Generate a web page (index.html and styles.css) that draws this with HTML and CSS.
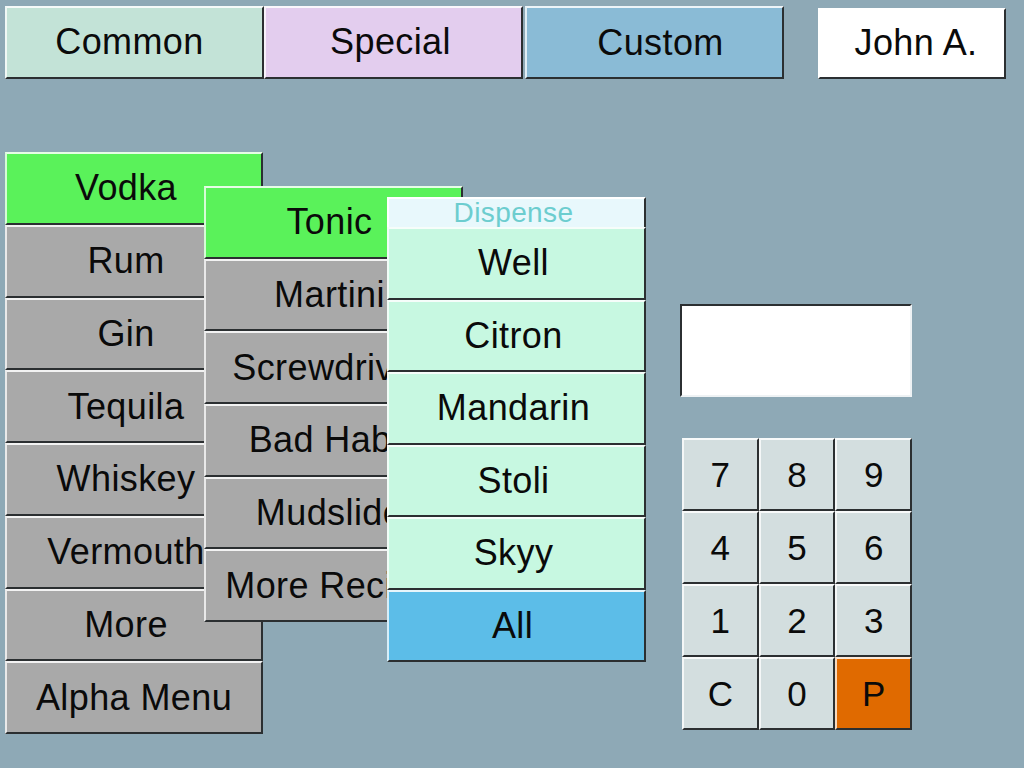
FILE: index.html
```html
<!DOCTYPE html>
<html>
<head>
<meta charset="utf-8">
<title>Bar POS</title>
<link rel="stylesheet" href="styles.css">
</head>
<body>
<div class="screen">
  <div class="tabs">
    <div class="btn tab tab-common">Common</div>
    <div class="btn tab tab-special">Special</div>
    <div class="btn tab tab-custom">Custom</div>
    <div class="btn user">John A.</div>
  </div>
  <div class="main">
    <div class="menus">
      <div class="menu menu-spirits">
        <div class="btn item green">Vodka</div>
        <div class="btn item grey">Rum</div>
        <div class="btn item grey">Gin</div>
        <div class="btn item grey">Tequila</div>
        <div class="btn item grey">Whiskey</div>
        <div class="btn item grey">Vermouth</div>
        <div class="btn item grey">More</div>
        <div class="btn item grey centered">Alpha Menu</div>
      </div>
      <div class="menu menu-mixers">
        <div class="btn item green">Tonic</div>
        <div class="btn item grey">Martini</div>
        <div class="btn item grey">Screwdriver</div>
        <div class="btn item grey">Bad Habit</div>
        <div class="btn item grey">Mudslide</div>
        <div class="btn item grey">More Recipe</div>
      </div>
      <div class="menu menu-dispense">
        <div class="dispense-title">Dispense</div>
        <div class="btn item mint">Well</div>
        <div class="btn item mint">Citron</div>
        <div class="btn item mint">Mandarin</div>
        <div class="btn item mint">Stoli</div>
        <div class="btn item mint">Skyy</div>
        <div class="btn item blue">All</div>
      </div>
    </div>
    <div class="side">
      <div class="display"></div>
      <div class="keypad">
        <div class="btn key">7</div>
        <div class="btn key">8</div>
        <div class="btn key">9</div>
        <div class="btn key">4</div>
        <div class="btn key">5</div>
        <div class="btn key">6</div>
        <div class="btn key">1</div>
        <div class="btn key">2</div>
        <div class="btn key">3</div>
        <div class="btn key">C</div>
        <div class="btn key">0</div>
        <div class="btn key key-p">P</div>
      </div>
    </div>
  </div>
</div>
</body>
</html>
```

FILE: styles.css
```css
* {
  box-sizing: border-box;
}

html, body {
  margin: 0;
  padding: 0;
}

body {
  background: #8ea9b6;
  font-family: "Liberation Sans", Arial, sans-serif;
  color: #0a0a0a;
}

.screen {
  width: 1024px;
  height: 768px;
  overflow: hidden;
  background: #8ea9b6;
}

.btn {
  display: flex;
  align-items: center;
  justify-content: center;
  font-size: 36px;
  letter-spacing: 0.4px;
  line-height: 1;
  border-top: 2px solid rgba(255, 255, 255, 0.85);
  border-left: 2px solid rgba(255, 255, 255, 0.75);
  border-bottom: 2px solid #2b2f31;
  border-right: 2px solid #2b2f31;
  white-space: nowrap;
  overflow: hidden;
}

/* top tabs */
.tabs {
  display: flex;
  align-items: flex-start;
  padding: 6px 0 0 5px;
  height: 79px;
}

.tab {
  height: 73px;
  width: 259px;
  padding-bottom: 2px;
}

.tab-common {
  background: #c3e3d7;
  padding-right: 10px;
}

.tab-special {
  background: #e3cdee;
  padding-right: 6px;
}

.tab-custom {
  background: #8abbd6;
  margin-left: 2px;
  padding-top: 3px;
  padding-left: 12px;
}

.user {
  margin-top: 2px;
  margin-left: 34px;
  width: 188px;
  height: 71px;
  background: #ffffff;
  padding-bottom: 2px;
  padding-left: 8px;
}

/* main area */
.main {
  display: flex;
  margin-top: 73px;
  padding-left: 5px;
}

.menus {
  position: relative;
  width: 258px;
  flex: none;
}

.menu {
  display: grid;
  width: 258px;
}

.menu-spirits {
  grid-template-rows: repeat(8, 1fr);
  height: 582px;
}

.menu-mixers {
  position: absolute;
  left: 199px;
  top: 34px;
  width: 259px;
  height: 436px;
  grid-template-rows: repeat(6, 1fr);
}

.menu-dispense {
  position: absolute;
  left: 382px;
  top: 45px;
  width: 259px;
  height: 465px;
  grid-template-rows: 30px repeat(6, 1fr);
}

.item {
  padding-right: 16px;
}

.menu-mixers .item {
  padding-right: 8px;
}

.item.centered {
  padding-right: 0;
}

.green {
  background: #5af25a;
}

.grey {
  background: #a9a9a9;
}

.mint {
  background: #c7f8e1;
  padding-right: 6px;
}

.blue {
  background: #5cbde8;
  padding-right: 8px;
}

.dispense-title {
  display: flex;
  align-items: center;
  justify-content: center;
  background: #e8f8fc;
  color: #6ccdcf;
  font-size: 28px;
  letter-spacing: 0.4px;
  line-height: 1;
  padding-right: 6px;
  border-top: 2px solid #ffffff;
  border-left: 2px solid #ffffff;
  border-right: 2px solid #2b2f31;
}

/* right side */
.side {
  margin-left: 417px;
  padding-top: 152px;
}

.display {
  width: 232px;
  height: 93px;
  background: #ffffff;
  border-top: 2px solid #2b2f31;
  border-left: 2px solid #2b2f31;
  border-bottom: 2px solid #eef2f4;
  border-right: 2px solid #eef2f4;
}

.keypad {
  margin-top: 41px;
  margin-left: 2px;
  width: 230px;
  height: 292px;
  display: grid;
  grid-template-columns: repeat(3, 1fr);
  grid-template-rows: repeat(4, 1fr);
}

.key {
  background: #d3dedf;
  font-size: 35px;
  letter-spacing: 0;
}

.key-p {
  background: #e06a00;
}
```
